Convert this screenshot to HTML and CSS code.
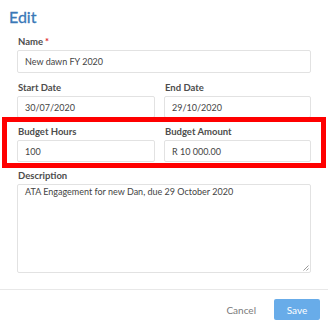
FILE: index.html
```html
<!DOCTYPE html>
<html>
<head>
<meta charset="utf-8">
<link rel="stylesheet" href="styles.css">
</head>
<body>
<div class="modal">
  <h1 class="title">Edit</h1>
  <div class="form">
    <div class="field">
      <label class="label">Name<span class="req">*</span></label>
      <div class="input">New dawn FY 2020</div>
    </div>
    <div class="row">
      <div class="field">
        <label class="label">Start Date</label>
        <div class="input">30/07/2020</div>
      </div>
      <div class="field">
        <label class="label">End Date</label>
        <div class="input">29/10/2020</div>
      </div>
    </div>
    <div class="row">
      <div class="field">
        <label class="label">Budget Hours</label>
        <div class="input">100</div>
      </div>
      <div class="field">
        <label class="label">Budget Amount</label>
        <div class="input">R 10 000.00</div>
      </div>
    </div>
    <div class="field">
      <label class="label">Description</label>
      <div class="textarea">ATA Engagement for new Dan, due 29 October 2020
        <svg class="grip" width="8" height="8" viewBox="0 0 8 8"><path d="M7.5 2.5 L2.5 7.5 M7.5 5.5 L5.5 7.5" stroke="#999" stroke-width="1" fill="none"/></svg>
      </div>
    </div>
  </div>
  <div class="footer">
    <button class="btn cancel">Cancel</button>
    <button class="btn save">Save</button>
  </div>
  <div class="highlight"></div>
</div>
</body>
</html>
```
FILE: styles.css
```css
* { box-sizing: border-box; }
html, body { margin: 0; padding: 0; background: #fff; }
body { font-family: Lato, "Open Sans", sans-serif; width: 328px; height: 330px; overflow: hidden; }
.modal { position: relative; height: 330px; }
.title { margin: 0; padding: 7px 0 0 9px; font-size: 16px; line-height: 20px; font-weight: 400; color: #3a78b7; height: 35px; -webkit-text-stroke: 0.3px #3a78b7; }
.form { padding: 0 17px 0 17px; display: flex; flex-direction: column; gap: 7px; }
.form > .field:first-child { margin-bottom: 1px; }
.row { display: grid; grid-template-columns: 138px 147px; column-gap: 9px; }
.field { display: flex; flex-direction: column; }
.label { font-size: 9.5px; font-weight: 700; color: #4d4d4d; line-height: 14px; margin-bottom: 1px; padding-left: 1px; }
.req { color: #e0282d; margin-left: 2px; }
.input { height: 22px; border: 1px solid #e2e2e2; border-radius: 2px; font-size: 9px; color: #444; padding: 0 7px; display: flex; align-items: center; }
.form > .field:first-child .input { height: 23px; }
.textarea { position: relative; height: 89px; border: 1px solid #e2e2e2; border-radius: 2px; font-size: 9px; color: #444; padding: 1px 7px; line-height: 12px; }
.grip { position: absolute; right: 1px; bottom: 1px; }
.footer { margin-top: 16px; border-top: 1px solid #e8e8e8; display: flex; justify-content: flex-end; align-items: center; gap: 18px; padding: 9px 8px 0 0; }
.btn { font-family: Lato, "Open Sans", sans-serif; font-size: 10px; border: 0; height: 21px; border-radius: 2px; }
.cancel { background: none; color: #7a7a7a; padding: 0; }
.save { background: #68ace9; color: #fff; width: 46px; }
.highlight { position: absolute; left: 2px; top: 117px; width: 324px; height: 51px; border: 5px solid #ff0000; pointer-events: none; }
```
